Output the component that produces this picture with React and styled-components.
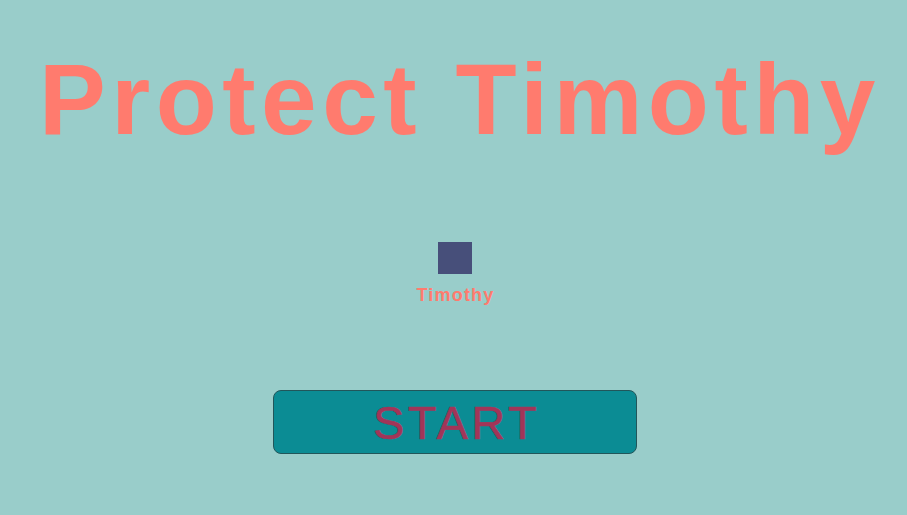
import React from 'react';
import styled, { createGlobalStyle } from 'styled-components';

const GlobalStyle = createGlobalStyle`
  html, body {
    margin: 0;
    padding: 0;
    background: #99cdca;
  }
  body {
    font-family: 'Liberation Sans', Arial, sans-serif;
  }
`;

const Screen = styled.div`
  width: 907px;
  height: 515px;
  background: #99cdca;
  display: flex;
  flex-direction: column;
  align-items: center;
  overflow: hidden;
`;

const Title = styled.h1`
  margin: 49px 0 0 0;
  padding-left: 13px;
  font-size: 100px;
  line-height: 1;
  font-weight: 700;
  letter-spacing: 5.5px;
  color: #ff7b6e;
  white-space: nowrap;
`;

const Player = styled.div`
  margin: 93px 0 0 4px;
  display: flex;
  flex-direction: column;
  align-items: center;
  gap: 11px;
`;

const Avatar = styled.div`
  width: 34px;
  height: 32px;
  background: #474f7a;
`;

const Name = styled.span`
  font-size: 18px;
  font-weight: 700;
  letter-spacing: 1.2px;
  line-height: 20px;
  color: #ff7b6e;
`;

const StartButton = styled.button`
  margin: 85px 0 0 2px;
  width: 364px;
  height: 64px;
  background: #0b8c94;
  border: 1px solid #21565a;
  border-radius: 8px;
  color: #a23558;
  font-family: 'Liberation Sans', Arial, sans-serif;
  font-size: 47px;
  letter-spacing: 3.5px;
  -webkit-text-stroke: 0.6px #a23558;
  padding: 0 0 0 4px;
  line-height: 1;
  cursor: pointer;
`;

export default function App() {
  return (
    <>
      <GlobalStyle />
      <Screen>
        <Title>Protect Timothy</Title>
        <Player>
          <Avatar />
          <Name>Timothy</Name>
        </Player>
        <StartButton>START</StartButton>
      </Screen>
    </>
  );
}
